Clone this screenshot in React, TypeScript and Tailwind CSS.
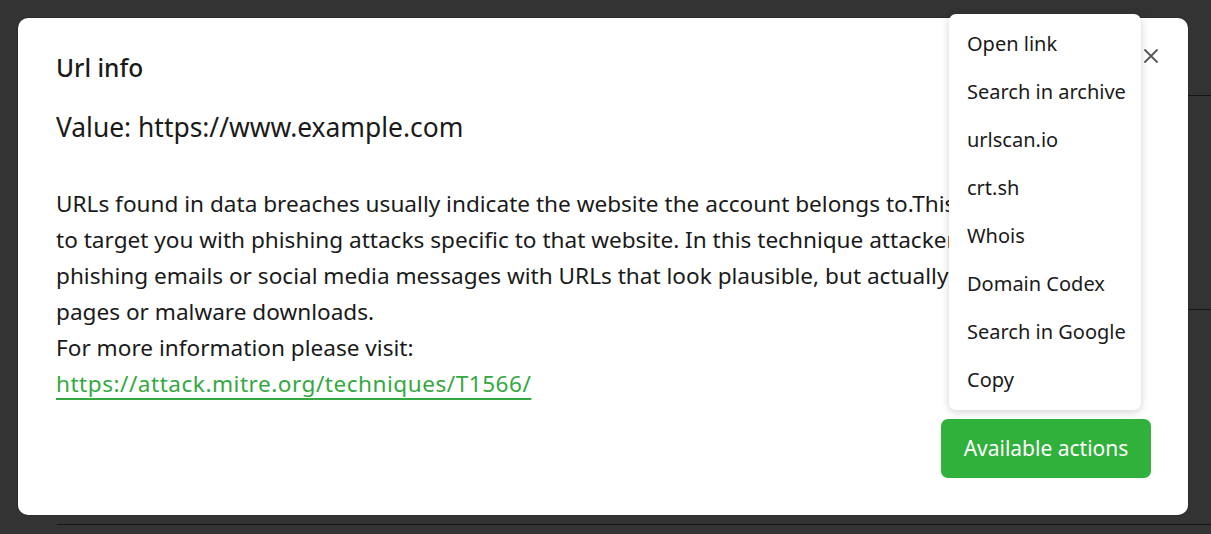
import React from "react";

const items = [
  "Open link",
  "Search in archive",
  "urlscan.io",
  "crt.sh",
  "Whois",
  "Domain Codex",
  "Search in Google",
  "Copy",
];

export default function App() {
  return (
    <div
      className="relative h-[534px] w-[1211px] overflow-hidden bg-[#333333]"
      style={{ fontFamily: '"Noto Sans", "Open Sans", sans-serif' }}
    >
      {/* underlying page (dimmed) */}
      <div className="ml-[57px] flex flex-col">
        <div className="h-[96px] border-b border-[#161616]" />
        <div className="h-[214px] border-b border-[#161616]" />
        <div className="h-[215px] border-b border-[#161616]" />
      </div>

      {/* modal */}
      <div className="absolute left-[18px] top-[18px] flex h-[497px] w-[1170px] flex-col overflow-hidden rounded-[10px] bg-white pl-[38px] pr-[37px] pt-[34px] pb-[37px] text-[#1a1a1a] shadow-[0_0_0_1px_rgba(0,0,0,0.12)]">
        <button className="absolute right-[27px] top-[28px] flex h-[20px] w-[20px] items-center justify-center text-[#555]">
          <svg width="16" height="16" viewBox="0 0 16 16" fill="none">
            <path d="M2 2L14 14M14 2L2 14" stroke="currentColor" strokeWidth="1.8" strokeLinecap="round" />
          </svg>
        </button>
        <h2 className="text-[24.5px] font-medium leading-[32px]">Url info</h2>
        <div className="mt-[25px] text-[26.4px] leading-[36px]">Value: https://www.example.com</div>
        <div className="mt-[41px] w-[893px] overflow-hidden whitespace-nowrap text-[22.6px] leading-[36px]">
          URLs found in data breaches usually indicate the website the account belongs to.This could be used
          <br />
          to target you with phishing attacks specific to that website. In this technique attackers send
          <br />
          phishing emails or social media messages with URLs that look plausible, but actually lead to
          <br />
          pages or malware downloads.
          <br />
          For more information please visit:
          <br />
          <a
            href="#"
            className="tracking-[0.5px] text-[#35a83f] underline decoration-[#35a83f] decoration-2 underline-offset-[6px]"
          >
            https://attack.mitre.org/techniques/T1566/
          </a>
        </div>
        <div className="mt-auto flex justify-end">
          <button className="h-[59px] w-[210px] rounded-[7px] bg-[#2fb13c] text-[21px] text-white">
            Available actions
          </button>
        </div>
      </div>

      {/* dropdown menu */}
      <div className="absolute left-[949px] top-[14px] w-[192px] rounded-[7px] bg-white py-[6px] shadow-[0_2px_8px_rgba(0,0,0,0.18)]">
        {items.map((it) => (
          <div
            key={it}
            className="flex h-[48px] items-center whitespace-nowrap pl-[18px] text-[20px] text-[#1a1a1a]"
          >
            {it}
          </div>
        ))}
      </div>
    </div>
  );
}
